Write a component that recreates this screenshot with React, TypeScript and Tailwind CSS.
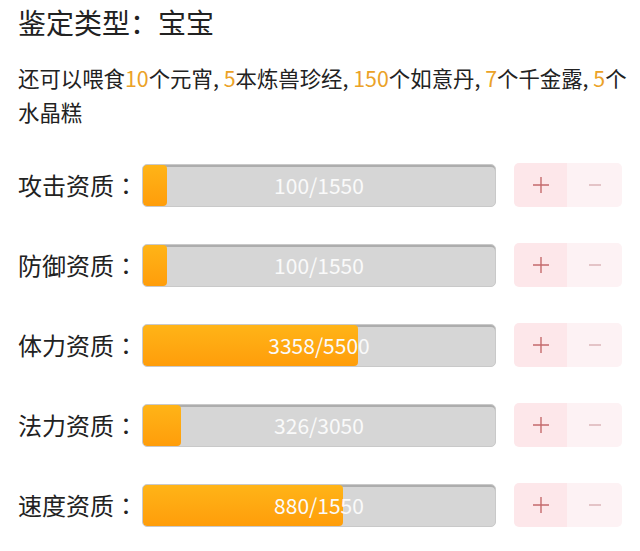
import React from "react";

type Stat = { label: string; value: number; max: number };

const stats: Stat[] = [
  { label: "攻击资质", value: 100, max: 1550 },
  { label: "防御资质", value: 100, max: 1550 },
  { label: "体力资质", value: 3358, max: 5500 },
  { label: "法力资质", value: 326, max: 3050 },
  { label: "速度资质", value: 880, max: 1550 },
];

const font = { fontFamily: '"Noto Sans CJK SC", "Noto Sans", sans-serif' };
const centeredColon = { fontFamily: '"Noto Sans CJK TC", sans-serif' };

function Num({ children }: { children: React.ReactNode }) {
  return <span className="text-[#eba227]">{children}</span>;
}

function StatRow({ stat }: { stat: Stat }) {
  const pct = Math.max((stat.value / stat.max) * 100, 6.8);
  return (
    <div className="flex items-center h-[44px]">
      <div className="w-[124px] text-[24px] text-[#222] leading-none whitespace-nowrap">
        {stat.label}
        <span style={centeredColon}>：</span>
      </div>
      <div className="relative w-[354px] h-[43px] rounded-[5px] bg-[#d6d6d6] border border-[#c9c9c9] shadow-[inset_0_2px_0_#adadad] overflow-hidden">
        <div
          className="absolute left-0 top-0 bottom-0 rounded-[4px] bg-gradient-to-b from-[#ffb417] to-[#ff9d0a]"
          style={{ width: `${pct}%` }}
        />
        <div className="absolute inset-0 flex items-center justify-center text-[21px] text-[#fafafa] leading-none">
          {stat.value}/{stat.max}
        </div>
      </div>
      <div className="ml-[18px] flex h-[44px] rounded-[5px] overflow-hidden">
        <button className="w-[53px] h-full bg-[#fde7ea] flex items-center justify-center">
          <svg width="18" height="18" viewBox="0 0 18 18">
            <path d="M9 1v16M1 9h16" stroke="#c46a6c" strokeWidth="1.4" />
          </svg>
        </button>
        <button className="w-[55px] h-full bg-[#fdf2f4] flex items-center justify-center">
          <svg width="12" height="4" viewBox="0 0 12 4">
            <path d="M0 2h12" stroke="#dbb5b8" strokeWidth="1.3" />
          </svg>
        </button>
      </div>
    </div>
  );
}

export default function App() {
  return (
    <div className="w-[640px] h-[551px] bg-white px-[18px] overflow-hidden" style={font}>
      <div className="text-[28px] leading-[44px] text-[#222]">鉴定类型：宝宝</div>

      <div className="mt-[17px] text-[21.4px] leading-[34px] text-[#222]">
        <div className="whitespace-nowrap">
          还可以喂食<Num>10</Num>个元宵, <Num>5</Num>本炼兽珍经, <Num>150</Num>个如意丹, <Num>7</Num>个千金露, <Num>5</Num>个
        </div>
        <div>水晶糕</div>
      </div>

      <div className="mt-[34px] flex flex-col gap-[36px]">
        {stats.map((s) => (
          <StatRow key={s.label} stat={s} />
        ))}
      </div>
    </div>
  );
}
